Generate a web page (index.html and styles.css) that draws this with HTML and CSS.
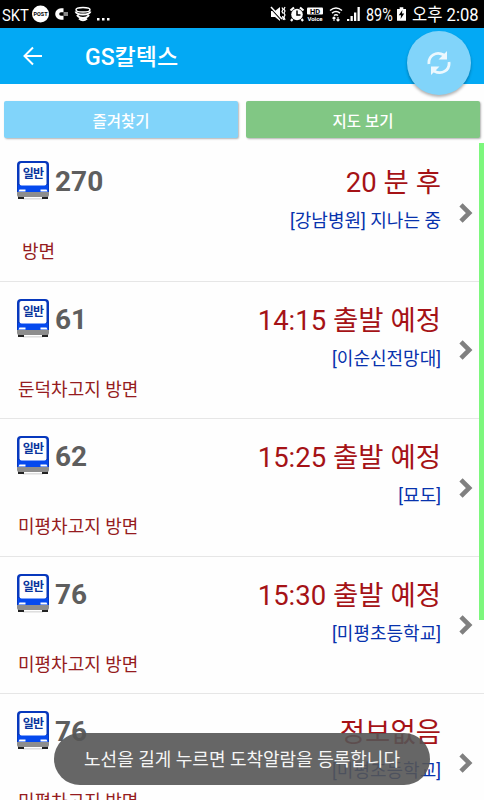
FILE: index.html
```
<!DOCTYPE html>
<html lang="ko">
<head>
    <meta charset="UTF-8">
    <meta name="viewport" content="width=device-width, initial-scale=1.0">
    <title>GS칼텍스</title>
    <link rel="stylesheet" href="styles.css">
</head>
<body>

    <svg class="defs" width="0" height="0">
        <symbol id="bus" viewBox="0 0 32 39">
            <path d="M6 37.800h20" stroke="#ddd" stroke-width="1.5"/>
            <path d="M1 35h6v3H1zM25 35h6v3h-6z" fill="#222"/>
            <path d="M0 31V4q0-4 4-4h24q4 0 4 4v27z" fill="#0738bd"/>
            <path d="M1 24h30v7H1z" fill="#0549ee"/>
            <rect x="2.500" y="2" width="27" height="22.500" rx="2" fill="#fff"/>
            <path d="M2.500 28.500h6v2h-7zM23.500 28.500h6l1 2h-7z" fill="#fff"/>
            <path d="M0 31h32v3q0 2-2 2H2q-2 0-2-2z" fill="#8d8d8d"/>
            <text x="16" y="17" text-anchor="middle" class="bus-text">일반</text>
        </symbol>
        <symbol id="arrow" viewBox="0 0 14 20">
            <path d="M2 1.800L10.200 10L2 18.200" fill="none" stroke="#808080" stroke-width="4.600"/>
        </symbol>
    </svg>

    <div class="status">
        <span class="carrier">SKT</span>
        <svg class="status-left" width="82" height="28" viewBox="0 0 82 28">
            <circle cx="9.500" cy="14" r="8.500" fill="#fff"/>
            <text x="9.500" y="16" text-anchor="middle" class="post-text">POST</text>
            <path d="M32.500 10.200h-2.500a3.800 3.800 0 0 0 0 7.600h2.500" fill="none" stroke="#fff" stroke-width="4"/>
            <path d="M32.500 12h4.500v4h-4.500z" fill="#888"/>
            <ellipse cx="52" cy="9.800" rx="7" ry="2.300" fill="none" stroke="#fff" stroke-width="1.500"/>
            <path d="M44.500 11.500q1 3 7.500 3t7.500-3M46 15q2 3 6 3t6-3M48 18.500q4 3.500 8 0" fill="none" stroke="#fff" stroke-width="2"/>
            <path d="M66 18h2.500v2.500H66zM71 18h2.500v2.500h-2.500zM76 18h2.500v2.500h-2.500z" fill="#fff"/>
        </svg>
        <svg class="status-right" width="96" height="28" viewBox="0 0 96 28">
            <path d="M1 11h4l5-4v14l-5-4H1z" fill="#fff"/>
            <path d="M1 8.500l10 11" stroke="#000" stroke-width="1.200"/>
            <path d="M1 7l11 12" stroke="#fff" stroke-width="1.500"/>
            <path d="M12 7.500l1 2-1 2 1 2M12.500 16l1 4M15 7l-1 2 1 2-1 2 1 2-1 2 1 3" fill="none" stroke="#fff" stroke-width="1.200"/>
            <circle cx="27" cy="14.500" r="5.800" fill="#fff"/>
            <path d="M27 10.500v4.500h3.500" fill="none" stroke="#000" stroke-width="1.500"/>
            <path d="M20.500 10.500l3.500-3M33.500 10.500l-3.500-3M22.500 19l-1.500 2M31.500 19l1.500 2" stroke="#fff" stroke-width="2.200"/>
            <rect x="37" y="7.500" width="16" height="7" rx="1" fill="#fff"/>
            <text x="45" y="13.800" text-anchor="middle" class="hd-text">HD</text>
            <text x="45" y="20.500" text-anchor="middle" class="voice-text">Voice</text>
            <path d="M60 10.500q6-5 12 0M62 13.200q4-3.300 8 0M64 15.500q2-1.500 4 0" fill="none" stroke="#fff" stroke-width="1.500"/>
            <path d="M64 21v-4M62.500 18.500l1.500-1.500 1.500 1.500M68 17v4M66.500 19.500l1.500 1.500 1.500-1.500" fill="none" stroke="#fff" stroke-width="1.100"/>
            <path d="M77 19h2.300v2H77zM80.500 16h2.300v5h-2.300zM84 12.500h2.300v8.500h-2.300zM87.500 7h2.300v14h-2.300z" fill="#fff"/>
        </svg>
        <span class="percent">89%</span>
        <svg class="battery" width="9" height="14" viewBox="0 0 10 15">
            <path d="M3 0h4v2h3v13H0V2h3z" fill="#fff"/>
            <path d="M6 3L2 9h2.500L4 13l4-6H5.500z" fill="#000"/>
        </svg>
        <span class="clock">오후 2:08</span>
    </div>

    <div class="header">
        <svg width="20" height="20" viewBox="0 0 20 20">
            <path d="M19 10H2M10 1.500L1.500 10L10 18.500" fill="none" stroke="#fff" stroke-width="2"/>
        </svg>
        <h1>GS칼텍스</h1>
        <button class="refresh">
            <svg width="24" height="26" viewBox="0 0 24 26">
                <path d="M2 14C1 6 9 .500 17 5M22 12C23 20 15 25.500 7 21" fill="none" stroke="#fff" stroke-width="2.800"/>
                <path d="M20 1v8.500h-8.500zM4 25v-8.500h8.500z" fill="#fff"/>
            </svg>
        </button>
    </div>

    <div class="buttons">
        <button class="btn favorite">즐겨찾기</button>
        <button class="btn map">지도 보기</button>
    </div>

    <div class="list">
        <div class="row">
            <svg class="bus"><use href="#bus"/></svg>
            <span class="number">270</span>
            <div class="arrival">
                <p class="time">20 분 후</p>
                <p class="stop">[강남병원] 지나는 중</p>
            </div>
            <svg class="arrow"><use href="#arrow"/></svg>
            <p class="direction empty">방면</p>
        </div>
        <div class="row">
            <svg class="bus"><use href="#bus"/></svg>
            <span class="number">61</span>
            <div class="arrival">
                <p class="time">14:15 출발 예정</p>
                <p class="stop">[이순신전망대]</p>
            </div>
            <svg class="arrow"><use href="#arrow"/></svg>
            <p class="direction">둔덕차고지 방면</p>
        </div>
        <div class="row">
            <svg class="bus"><use href="#bus"/></svg>
            <span class="number">62</span>
            <div class="arrival">
                <p class="time">15:25 출발 예정</p>
                <p class="stop">[묘도]</p>
            </div>
            <svg class="arrow"><use href="#arrow"/></svg>
            <p class="direction">미평차고지 방면</p>
        </div>
        <div class="row">
            <svg class="bus"><use href="#bus"/></svg>
            <span class="number">76</span>
            <div class="arrival">
                <p class="time">15:30 출발 예정</p>
                <p class="stop">[미평초등학교]</p>
            </div>
            <svg class="arrow"><use href="#arrow"/></svg>
            <p class="direction">미평차고지 방면</p>
        </div>
        <div class="row">
            <svg class="bus"><use href="#bus"/></svg>
            <span class="number">76</span>
            <div class="arrival">
                <p class="time">정보없음</p>
                <p class="stop">[미평초등학교]</p>
            </div>
            <svg class="arrow"><use href="#arrow"/></svg>
            <p class="direction">미평차고지 방면</p>
        </div>
        <div class="scrollbar"></div>
    </div>

    <div class="toast">노선을 길게 누르면 도착알람을 등록합니다</div>

</body>
</html>
```
FILE: styles.css
```
* {
    box-sizing: border-box;
}
body {
    margin: 0;
    height: 800px;
    overflow: hidden;
    position: relative;
    background: #fefefe;
    font-family: Roboto, "Noto Sans CJK KR", sans-serif;
}
p, h1 {
    margin: 0;
    font-weight: normal;
}
.defs {
    position: absolute;
}
.status {
    display: flex;
    align-items: center;
    height: 28px;
    background: #000;
    color: #fff;
    padding: 0 6px 0 2px;
    white-space: nowrap;
    line-height: 26px;
}
.carrier {
    font-size: 17px;
    width: 29px;
    transform: scaleX(0.87);
    transform-origin: left;
    padding-top: 1px;
}
.status-right {
    margin-left: auto;
}
.percent {
    font-size: 18px;
    width: 28px;
    transform: scaleX(0.8);
    transform-origin: left;
    padding-top: 2px;
}
.battery {
    margin: 0 6px 0 3px;
}
.clock {
    font-size: 18px;
    width: 66px;
    padding-top: 2px;
    transform: scaleX(0.92);
    transform-origin: left;
}
.post-text {
    font-size: 5.5px;
    font-weight: bold;
}
.hd-text {
    font-size: 7.5px;
    font-weight: bold;
}
.voice-text {
    font-size: 6px;
    font-weight: bold;
    fill: #fff;
}
.bus-text {
    font-size: 12px;
    font-weight: bold;
    letter-spacing: -0.8px;
    fill: #08349c;
}
.header {
    display: flex;
    align-items: center;
    position: relative;
    height: 56px;
    padding-left: 23px;
    background: #03a9f4;
}
.header h1 {
    margin: 3px 0 0 42px;
    font-size: 23px;
    font-weight: 500;
    line-height: 34px;
    color: #fff;
}
.refresh {
    position: absolute;
    right: 13px;
    top: 3px;
    width: 64px;
    height: 64px;
    padding: 0;
    border: none;
    border-radius: 50%;
    background: #81d4fa;
    box-shadow: 0 2px 3px rgba(0, 0, 0, 0.3);
}
.refresh svg {
    display: block;
    margin: auto;
    opacity: 0.85;
}
.buttons {
    display: flex;
    gap: 8px;
    padding: 17px 4px 0;
    height: 60px;
}
.btn {
    flex: 1;
    height: 37px;
    padding: 0;
    border: none;
    border-radius: 2px;
    box-shadow: 1px 1px 2px rgba(0, 0, 0, 0.3);
    color: #fff;
    font-family: inherit;
    font-size: 15.5px;
    font-weight: 500;
}
.favorite {
    background: #81d4fa;
}
.map {
    background: #81c784;
}
.list {
    position: relative;
}
.row {
    display: grid;
    grid-template-columns: 32px 110px 1fr 14px;
    grid-template-rows: 90px 1fr;
    height: 137.5px;
    padding: 0 11px 0 17px;
    border-bottom: 1px solid #e6e6e6;
}
.bus {
    width: 32px;
    height: 39px;
    margin-top: 17px;
}
.number {
    margin: 18px 0 0 6px;
    font-size: 28px;
    font-weight: bold;
    line-height: 40px;
    color: #5e5e5e;
}
.arrival {
    padding: 18px 18px 0 0;
    margin-left: -60px;
    text-align: right;
    white-space: nowrap;
}
.time {
    font-size: 27.5px;
    line-height: 42px;
    color: #a51216;
}
.stop {
    font-size: 18px;
    line-height: 34px;
    color: #0732ad;
}
.arrow {
    width: 14px;
    height: 20px;
    margin-top: 58.5px;
}
.direction {
    grid-column: 1 / -1;
    padding: 4px 0 0 1px;
    font-size: 18px;
    line-height: 28px;
    color: #951b20;
}
.direction.empty {
    padding-left: 5px;
}
.scrollbar {
    position: absolute;
    top: -1px;
    right: 0;
    width: 5px;
    height: 477px;
    background: #7df77d;
}
.toast {
    position: absolute;
    left: 54px;
    top: 733px;
    width: 376px;
    height: 52px;
    padding-top: 1px;
    border-radius: 26px;
    background: rgba(85, 85, 85, 0.9);
    color: #f5f5f5;
    font-size: 18px;
    line-height: 52px;
    text-align: center;
    white-space: nowrap;
}
```
